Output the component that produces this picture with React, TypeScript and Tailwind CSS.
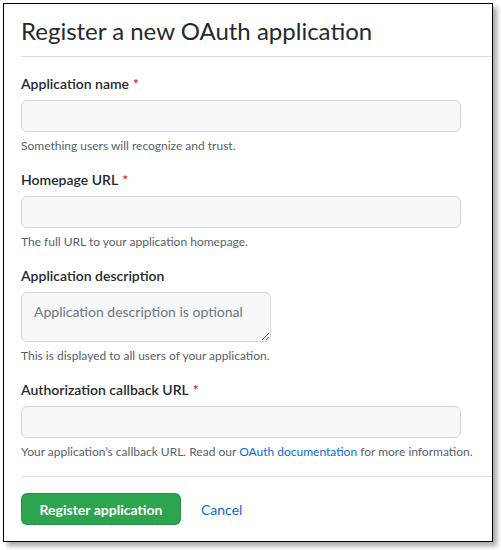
import React from "react";

function Label({ children, required }: { children: React.ReactNode; required?: boolean }) {
  return (
    <label className="block text-[14px] leading-[21px] font-semibold text-[#24292f]">
      {children}
      {required && <span className="text-[#cf222e] ml-[4px]">*</span>}
    </label>
  );
}

function Note({ children }: { children: React.ReactNode }) {
  return <p className="mt-[5px] text-[12px] leading-[18px] text-[#57606a] whitespace-nowrap">{children}</p>;
}

function Input() {
  return (
    <input
      type="text"
      className="mt-[6px] block w-[440px] h-[32px] rounded-[6px] border border-[#d0d7de] bg-[#f6f8fa] px-[12px] text-[14px] outline-none"
    />
  );
}

export default function App() {
  return (
    <div className="w-[501px] h-[550px] bg-white" style={{ fontFamily: 'Lato, "Noto Sans", sans-serif' }}>
      <div className="absolute left-[3px] top-[3px] w-[490px] h-[539px] border border-black bg-white shadow-[4px_4px_5px_rgba(0,0,0,0.35)]">
        <div className="pl-[17px] pt-[9px]">
          <h1 className="text-[24px] leading-[36px] font-normal text-[#24292f] pb-[7px] border-b border-[#d8dee4]">
            Register a new OAuth application
          </h1>
          <div className="pt-[16px]">
            <Label required>Application name</Label>
            <Input />
            <Note>Something users will recognize and trust.</Note>

            <div className="mt-[14px]">
              <Label required>Homepage URL</Label>
              <Input />
              <Note>The full URL to your application homepage.</Note>
            </div>

            <div className="mt-[14px]">
              <Label>Application description</Label>
              <textarea
                placeholder="Application description is optional"
                className="mt-[6px] block w-[250px] h-[50px] rounded-[6px] border border-[#d0d7de] bg-[#f6f8fa] px-[12px] py-[9px] text-[14px] leading-[20px] text-[#24292f] placeholder:text-[#6e7781] outline-none"
              />
              <Note>This is displayed to all users of your application.</Note>
            </div>

            <div className="mt-[14px]">
              <Label required>Authorization callback URL</Label>
              <Input />
              <Note>
                Your application’s callback URL. Read our{" "}
                <a className="text-[#0969da]">OAuth documentation</a> for more information.
              </Note>
            </div>
          </div>
          <div className="mt-[15px] border-t border-[#d8dee4] pt-[16px] flex items-center">
            <button className="h-[32px] w-[160px] rounded-[6px] bg-[#2da44e] border border-[rgba(27,31,36,0.15)] text-white text-[14px] font-bold">
              Register application
            </button>
            <a className="ml-[20px] text-[14px] text-[#0969da]">Cancel</a>
          </div>
        </div>
      </div>
    </div>
  );
}
